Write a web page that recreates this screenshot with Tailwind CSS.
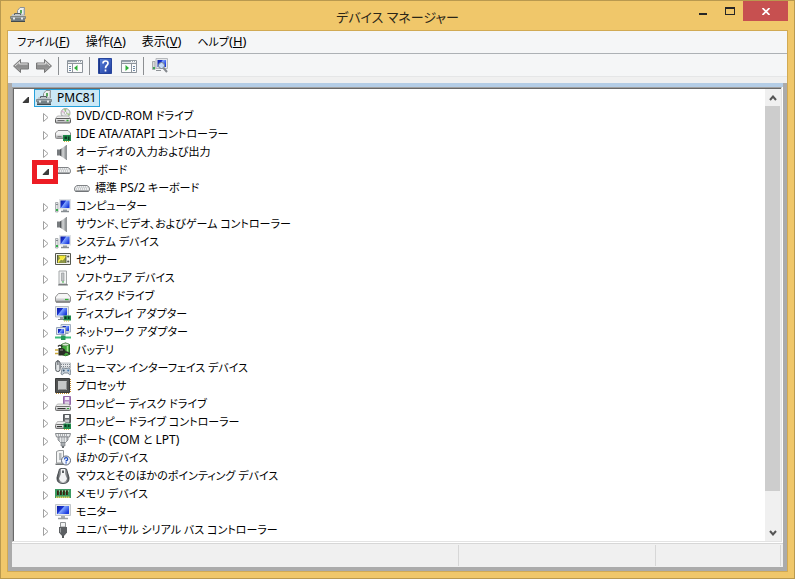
<!DOCTYPE html>
<html lang="ja">
<head>
    <meta charset="UTF-8" />
    <meta name="viewport" content="width=device-width, initial-scale=1.0" />
    <title>デバイス マネージャー</title>
    <script src="https://cdn.jsdelivr.net/npm/@tailwindcss/browser@4"></script>
</head>
<body class="flex h-screen flex-col overflow-hidden border border-[#b9994f] bg-[#f0c76a] font-['Noto_Sans','Noto_Sans_CJK_JP',sans-serif] text-[12px] text-black select-none [font-feature-settings:'palt']">

    <!-- Icon sprite -->
    <svg class="absolute size-0" aria-hidden="true">
        <defs>
            <linearGradient id="gSilver" x1="0" y1="0" x2="0" y2="1"><stop offset="0" stop-color="#f6f6f6" /><stop offset="1" stop-color="#a3a5a7" /></linearGradient>
            <linearGradient id="gCone" x1="0" y1="0" x2="1" y2="0"><stop offset="0" stop-color="#4f5356" /><stop offset=".45" stop-color="#d5d7d8" /><stop offset="1" stop-color="#7d8184" /></linearGradient>
            <linearGradient id="gDark" x1="0" y1="0" x2="1" y2="0"><stop offset="0" stop-color="#3c3f42" /><stop offset=".5" stop-color="#d8dadc" /><stop offset="1" stop-color="#45484b" /></linearGradient>
            <linearGradient id="gBlue" x1="0" y1="0" x2="1" y2=".6"><stop offset="0" stop-color="#0a1a9c" /><stop offset=".42" stop-color="#1b34d0" /><stop offset=".5" stop-color="#7fa4ff" /><stop offset="1" stop-color="#1c3de0" /></linearGradient>
            <linearGradient id="gHelp" x1="0" y1="0" x2="1" y2="1"><stop offset="0" stop-color="#5b83dd" /><stop offset="1" stop-color="#1f3d9f" /></linearGradient>
            <linearGradient id="gArrow" x1="0" y1="0" x2="0" y2="1"><stop offset="0" stop-color="#c2c2c2" /><stop offset=".5" stop-color="#8b8b8b" /><stop offset="1" stop-color="#a8a8a8" /></linearGradient>
        </defs>

        <symbol id="manager" viewBox="0 0 16 16">
            <path d="M7.500 8V3.500L10 .5h4.500V8" fill="#eef0f0" stroke="#8d9294" />
            <path d="M10 3h2v3.500h-2z" fill="#58a85c" />
            <path d="M13.500 1.500h1V8h-1z" fill="#a8acae" />
            <path d="M2.500 7h11l1.500 2.500H1z" fill="#c0c6c9" />
            <path d="M4.500 8V6.500h6V8" fill="none" stroke="#5a6266" />
            <path d="M.5 9.500h15v2H.5z" fill="#9aa3a8" stroke="#5c666a" stroke-width=".6" />
            <path d="M1 11.500h14V15H1z" fill="#727e84" />
            <path d="M1 14.500h14" stroke="#41494d" />
            <path d="M3 10.500h2v2H3zM11 10.500h2v2h-2z" fill="#e6eaeb" />
        </symbol>

        <symbol id="dvd" viewBox="0 0 16 16">
            <circle cx="10.500" cy="5" r="4.500" fill="#e9ebec" stroke="#8c8f92" stroke-width=".8" />
            <path d="M10.500 5L9 1l2.500-.2zM10.500 5l3.500 2.500.8-1.800z" fill="#9dcb7a" />
            <path d="M10.500 5l-4-1 .5-1.500z" fill="#e4a7d0" />
            <circle cx="10.500" cy="5" r="1.300" fill="#fff" stroke="#888" stroke-width=".5" />
            <path d="M2.500 8h11l2 2.500H.5z" fill="#ededed" stroke="#8a8a8a" stroke-width=".6" />
            <rect x=".5" y="10.500" width="15" height="4.500" rx="1" fill="url(#gSilver)" stroke="#5c5c5c" />
            <path d="M2.500 12.500h7" stroke="#6c6c6c" /><path d="M11.500 12.500h2" stroke="#31b431" stroke-width="1.500" />
        </symbol>

        <symbol id="ide" viewBox="0 0 16 16">
            <path d="M3 4.500h10L15.500 7v4.500q0 1-1 1h-13q-1 0-1-1V7z" fill="#f4f4f4" stroke="#8b8b8b" />
            <path d="M1 8h14v4H1z" fill="url(#gSilver)" /><path d="M2.500 10.500h4" stroke="#888" />
            <path d="M8 9h8v6H8z" fill="#1f8a4a" /><path d="M9.500 10.500H12V13H9.500zM13 10.500h1.500V14H13z" fill="#0c3a22" />
            <path d="M9 15.500h5" stroke="#d7b93c" stroke-dasharray="1 1" />
        </symbol>

        <symbol id="speaker" viewBox="0 0 16 16">
            <path d="M2 5.500h3v6H2z" fill="#777b7e" />
            <path d="M5 5.500L11.500 1v15L5 11.500z" fill="url(#gCone)" />
            <path d="M11.500 1v15" stroke="#909497" />
            <path d="M5.500 5.500v6" stroke="#4b4f52" stroke-width=".8" />
        </symbol>

        <symbol id="keyboard" viewBox="0 0 16 16">
            <path d="M3 5.500h10q2.500 1 2.500 3.500t-1.500 2.500H2Q.5 11.500.5 9T3 5.500z" fill="#eeeff0" stroke="#808386" />
            <path d="M3 7h10.500M2 9h12" stroke="#a9adb0" stroke-dasharray="1 1" /><path d="M3 8h10.500" stroke="#c3c6c8" stroke-dasharray="1 1" stroke-dashoffset="1" />
            <path d="M1.500 11h13" stroke="#63676a" />
        </symbol>

        <symbol id="computer" viewBox="0 0 16 16">
            <path d="M.5 4.500H3V14H.5z" fill="#e4e6e8" stroke="#9a9fa3" stroke-width=".8" />
            <path d="M1 11h2v2H1z" fill="#33b04a" /><path d="M1 6.500h2" stroke="#848a8f" />
            <path d="M4 1h12v10.500H4z" fill="#dfe2e5" />
            <path d="M5.500 2.500h9V10h-9z" fill="url(#gBlue)" />
            <path d="M8 11.500h4V13H8z" fill="#9ba1a6" /><path d="M6 13.500h8" stroke="#868c91" stroke-width="1.500" />
        </symbol>

        <symbol id="sensor" viewBox="0 0 16 16">
            <path d="M.5 1.500h15v11H.5z" fill="#f2f3ee" stroke="#55584f" />
            <path d="M2 3h9v8H2z" fill="#8d9648" />
            <path d="M2.500 10.500l3.500-4 1.500 1L10.500 4" fill="none" stroke="#fff04a" stroke-width="1.600" />
            <path d="M4 4h5L8 6.500H5z" fill="#f5e932" />
            <path d="M2.500 3v8M11 3v8" stroke="#4c5133" stroke-width=".8" />
            <circle cx="13.200" cy="4.500" r="1.100" fill="#50544e" /><circle cx="13.200" cy="9.500" r="1.100" fill="#50544e" />
        </symbol>

        <symbol id="software" viewBox="0 0 16 16">
            <path d="M4 1h7.500v13H4z" fill="#f3f4f4" stroke="#a5a8a9" />
            <path d="M6.500 3h2.500v8H6.500z" fill="#c1c4c5" stroke="#8e9293" stroke-width=".6" /><path d="M7 11.500h2v1H7z" fill="#42b549" />
            <path d="M3.500 14h9l.5 1.500H3z" fill="#76797b" />
        </symbol>

        <symbol id="disk" viewBox="0 0 16 16">
            <path d="M3.500 5.500h9l3 3.500V13q0 1-1 1h-13q-1 0-1-1V9z" fill="#f6f6f6" stroke="#939393" />
            <path d="M1 9.500h14v4H1z" fill="url(#gSilver)" />
            <path d="M1 14h14" stroke="#5f5f5f" /><path d="M10 11.500h3.500" stroke="#33ad35" stroke-width="1.300" />
        </symbol>

        <symbol id="display" viewBox="0 0 16 16">
            <path d="M.5.500h13v10.500H.5z" fill="#e6eaed" stroke="#b9bfc4" />
            <path d="M2 2h10v7.500H2z" fill="url(#gBlue)" />
            <path d="M5 11h3v2H5z" fill="#979da3" /><path d="M3 13.500h6" stroke="#7e858b" />
            <path d="M8.500 9.500H16V14.500H8.500z" fill="#228b4d" /><path d="M9.500 10.500h2V13h-2zM13 10.500h1.500v2.500H13z" fill="#0b3922" />
            <path d="M9 15h5" stroke="#d7b93c" stroke-dasharray="1 1" />
        </symbol>

        <symbol id="network" viewBox="0 0 16 16">
            <path d="M6 .5h9.500V8H6z" fill="#dfe7f2" stroke="#a3b0c0" /><path d="M7.500 2h6.500v5H7.500z" fill="url(#gBlue)" />
            <path d="M1.500 3.500h9v7h-9z" fill="#e3eaf4" stroke="#98a5b7" /><path d="M3 5h6v4.500H3z" fill="url(#gBlue)" />
            <path d="M10.500 8.500h3V10h-3z" fill="#8ea0b5" />
            <path d="M0 13.500h16" stroke="#3fbd78" stroke-width="2" />
            <path d="M6 11.500h4.500V16H6z" fill="#259a58" /><path d="M8 12v-1.500" stroke="#6b7c90" />
        </symbol>

        <symbol id="battery" viewBox="0 0 16 16">
            <path d="M6.500 2.500Q10.500-.5 14.500 2.500V12.500q-4 2.500-8 0z" fill="#41a83a" stroke="#2a7026" />
            <path d="M12.500 4v7.500" stroke="#a4e894" stroke-width="1.500" /><ellipse cx="10.500" cy="2.500" rx="3.200" ry="1.300" fill="#dcead7" stroke="#5e8355" stroke-width=".6" />
            <path d="M3 4.500Q5 2 7.500 5" stroke="#333" stroke-width="1.300" fill="none" />
            <path d="M0 8h3.500M0 11.500h3.500" stroke="#cfac3c" stroke-width="1.500" />
            <path d="M3.500 6h2.500Q10.500 6 10.500 9.800 10.500 13.500 6 13.500H3.500z" fill="#2b2e26" /><path d="M5 8h3" stroke="#95998d" /><path d="M10 9.800q3 0 5 2.500" stroke="#30332c" stroke-width="1.800" fill="none" />
        </symbol>

        <symbol id="hid" viewBox="0 0 16 16">
            <path d="M5 3h10.500v5H5z" fill="#e4e6e8" stroke="#a5abb0" stroke-width=".7" /><path d="M6 4.500h9M6 6.500h9" stroke="#80878d" stroke-dasharray="1 1" />
            <rect x=".7" y="1" width="4.300" height="10.500" rx="2" fill="#e1e4e6" stroke="#53595e" /><path d="M2.900 0v5" stroke="#4d5358" />
            <path d="M7 8.500Q8 7.500 9.500 8.500h3q1.500-1 2.500 0l1 5.500q-1.500 2-3-1H9q-1.500 3-3 1z" fill="#c5d0da" stroke="#6e7b87" stroke-width=".8" />
            <circle cx="8.700" cy="10.500" r="1" fill="#3b536b" /><circle cx="13.200" cy="10.500" r="1" fill="#4479b0" />
        </symbol>

        <symbol id="cpu" viewBox="0 0 16 16">
            <path d="M1 15.500h14M15.500 1v14" stroke="#c08a2d" stroke-dasharray="1 1" />
            <path d="M.5.500h14v14H.5z" fill="#505252" stroke="#3a3c3c" />
            <path d="M3 3h9v9H3z" fill="#c6c8c8" /><path d="M3.500 11.500h8v-8" fill="none" stroke="#8f9191" />
        </symbol>

        <symbol id="floppy" viewBox="0 0 16 16">
            <path d="M8.500.5h7v8h-7z" fill="#b488c5" stroke="#9468a8" /><path d="M10 1h4v3h-4z" fill="#f5eff8" /><path d="M10 5.500h4v3h-4z" fill="#e2d4e8" />
            <path d="M2.500 8h11l2 2.500H.5z" fill="#ececec" stroke="#999" stroke-width=".6" />
            <rect x=".5" y="10.500" width="15" height="4" rx="1" fill="url(#gSilver)" stroke="#707070" />
            <path d="M2.500 12.500h8" stroke="#333" /><path d="M12 12.500h2" stroke="#34a938" />
        </symbol>

        <symbol id="floppyctl" viewBox="0 0 16 16">
            <path d="M8.500.5h7v8h-7z" fill="#6d7073" stroke="#55585a" /><path d="M10 1h4v3h-4z" fill="#f3f4f5" /><path d="M10 5.500h4v3h-4z" fill="#c5c8ca" />
            <path d="M2.500 7.500h8v3H.5z" fill="#ececec" stroke="#999" stroke-width=".6" />
            <rect x=".5" y="10.500" width="14" height="4" rx="1" fill="url(#gSilver)" stroke="#707070" /><path d="M2 12.500h5" stroke="#333" />
            <path d="M8.500 9.500H16V15H8.500z" fill="#1f8a4a" /><path d="M9.500 10.500h2V13h-2zM13 10.500h1.500V13H13z" fill="#0c3a22" /><path d="M9 15.500h5" stroke="#d7b93c" stroke-dasharray="1 1" />
        </symbol>

        <symbol id="port" viewBox="0 0 16 16">
            <path d="M.5 1.500h15l-1 3.500h-13z" fill="#eceeef" stroke="#85898c" />
            <path d="M3 3h10" stroke="#686d71" stroke-dasharray="1 1" />
            <path d="M3 5h10v3l-2.500 2.500h-5L3 8z" fill="#b9bdc0" stroke="#7d8285" stroke-width=".8" />
            <path d="M5.500 5.500v4.500M8 5.500V10M10.500 5.500V10" stroke="#e9ebec" />
            <path d="M6 10.500h4V14H6z" fill="#a8adb0" stroke="#767b7f" stroke-width=".6" /><path d="M8 14v2" stroke="#6a6f73" stroke-width="2" />
        </symbol>

        <symbol id="other" viewBox="0 0 16 16">
            <path d="M1.500 1.500L4 .5h4.500V13h-7z" fill="#f3f4f4" stroke="#95989a" /><path d="M4 3h2.500v7H4z" fill="#b5b9bb" /><path d="M.5 13.500h9V15h-9z" fill="#6f7375" />
            <circle cx="11" cy="10.500" r="4.500" fill="#f2f6fd" stroke="#5c6575" />
            <path d="M9.500 9.500q0-1.800 1.600-1.800t1.600 1.600q0 .8-1.600 1.600v.6M11.100 12.300v1.200" fill="none" stroke="#1d4cc0" stroke-width="1.300" />
        </symbol>

        <symbol id="mouse" viewBox="0 0 16 16">
            <path d="M4.500 1Q8-.5 11.500 1L14 9.500Q14.500 15.500 8 15.500T2 9.500z" fill="url(#gDark)" stroke="#4a4f53" />
            <path d="M6 6h4l2 4.500Q11 14 8 14t-4-3.500z" fill="#f2f3f4" />
            <path d="M6 1h4v6H6z" fill="#f3f4f4" /><path d="M8 2.500v2.500" stroke="#34393d" stroke-width="1.600" />
        </symbol>

        <symbol id="memory" viewBox="0 0 16 16">
            <path d="M0 3h16v9H0z" fill="#3c9a62" />
            <path d="M2 4.500h1.800V9H2zM5 4.500h1.800V9H5zM8 4.500h1.800V9H8zM11 4.500h1.800V9H11z" fill="#3a2412" />
            <path d="M4 5h1M7 5h1M10 5h1M13 5h1" stroke="#e3ead7" />
            <path d="M1 11.300h14" stroke="#e4d160" stroke-width="1.500" stroke-dasharray="1.500 .5" />
        </symbol>

        <symbol id="monitor" viewBox="0 0 16 16">
            <path d="M.5 0.500h15v11H.5z" fill="#e7e9eb" stroke="#c3c7ca" />
            <path d="M2 2h12v8H2z" fill="url(#gBlue)" /><path d="M6 12h4v2H6z" fill="#a9adb1" /><path d="M3 14.500h10" stroke="#9a9fa3" stroke-width="1.500" />
        </symbol>

        <symbol id="usb" viewBox="0 0 16 16">
            <path d="M5.500.5h5V5h-5z" fill="#f2f3f3" stroke="#909395" />
            <path d="M4 5h8v5.500L9.500 13.500h-3L4 10.500z" fill="#5d6063" /><path d="M5.500 6v4.500" stroke="#9da0a2" /><path d="M8 13v3" stroke="#55585a" stroke-width="2" />
        </symbol>

        <symbol id="storage" viewBox="0 0 16 16">
            <path d="M3.500 1.500h9L15.500 5v7h-15V5z" fill="#a9abac" stroke="#6f7172" />
        </symbol>

        <symbol id="back" viewBox="0 0 16 16">
            <path d="M.5 8L7.500 1.500V5h8v6h-8v3.500z" fill="url(#gArrow)" stroke="#777" /><path d="M2 8l4.500-4v2h8" fill="none" stroke="#dcdcdc" />
        </symbol>

        <symbol id="pane" viewBox="0 0 16 16">
            <path d="M.5 2.500h15v12H.5z" fill="#fcfcfc" stroke="#8d949b" /><path d="M1 3.500h14" stroke="#9aa4ae" stroke-width="1.500" /><path d="M1 5.500h14" stroke="#8d949b" /><path d="M10 3.500h1M12 3.500h1M14 3.500h1" stroke="#fff" />
        </symbol>

        <symbol id="scan" viewBox="0 0 16 16">
            <path d="M.5 3.500h2.500v8H.5z" fill="#d9dadb" stroke="#999c9e" stroke-width=".8" /><path d="M1 9h2v2H1z" fill="#3ea557" />
            <path d="M4 .5h11.500v10H4z" fill="#e5e7ea" stroke="#b6b9bd" /><path d="M5.500 2H14v7H5.500z" fill="url(#gBlue)" />
            <path d="M4 12.500h5" stroke="#8f9397" />
            <circle cx="9.500" cy="7.500" r="3" fill="#cfe3fa" fill-opacity=".9" stroke="#74808c" /><path d="M11.500 10l3.500 4" stroke="#85898e" stroke-width="2" />
        </symbol>

        <symbol id="closed" viewBox="0 0 12 12"><path d="M3.500 2.500v8l4.500-4z" fill="#fff" stroke="#a0a0a0" /></symbol>
        <symbol id="opened" viewBox="0 0 12 12"><path d="M8.500 4v5.500H3z" fill="#3c3c3c" stroke="#1f1f1f" stroke-width=".8" /></symbol>
    </svg>

    <!-- Title bar -->
    <header class="flex h-[29px] shrink-0 items-start pl-[9px] pr-[6px]">
        <svg class="mt-[6px] size-4"><use href="#manager" /></svg>
        <h1 class="flex-1 pl-[80px] pt-1 text-center text-[13px] leading-6 text-[#2b2618]">デバイス マネージャー</h1>
        <button aria-label="最小化" class="flex h-5 w-[27px] justify-center pt-3"><span class="h-[2px] w-2 bg-[#262626]"></span></button>
        <button aria-label="最大化" class="flex h-5 w-[27px] justify-center pt-[6px]"><span class="h-2 w-[10px] border border-t-2 border-[#262626]"></span></button>
        <button aria-label="閉じる" class="flex h-5 w-[45px] items-center justify-center bg-[#c75050]">
            <svg class="h-[7px] w-2" viewBox="0 0 8 7"><path d="M.5 0l7 7M7.500 0l-7 7" stroke="#fff" stroke-width="1.700" /></svg>
        </button>
    </header>

    <div class="mx-[6px] mb-[6px] flex min-h-0 flex-1 flex-col border border-[#d1aa54] bg-[#f5f6f7]">
        <!-- Menus -->
        <nav class="flex h-[23px] shrink-0 items-center gap-4 border-b border-[#adb1b5] pl-[9px]">
            <button class="text-[11px]">ファイル<span class="text-[13px]">(<u>F</u>)</span></button>
            <button>操作<span class="text-[13px]">(<u>A</u>)</span></button>
            <button>表示<span class="text-[13px]">(<u>V</u>)</span></button>
            <button class="text-[11px]">ヘルプ<span class="text-[13px]">(<u>H</u>)</span></button>
        </nav>

        <!-- Toolbar -->
        <div class="flex h-[23px] shrink-0 items-center border-b border-[#e5e6e7] pl-[5px] pt-[2px]">
            <button aria-label="戻る"><svg class="size-4"><use href="#back" /></svg></button>
            <button aria-label="進む" class="ml-[7px]"><svg class="size-4 -scale-x-100"><use href="#back" /></svg></button>
            <span class="ml-[6px] mr-2 h-[18px] w-px bg-[#8c8f92]"></span>
            <button aria-label="コンソール ツリーの表示"><svg class="size-4" viewBox="0 0 16 16"><use href="#pane" /><path d="M5.500 6v8" stroke="#8d949b" /><path d="M2 8.500h2M2 10.500h2M2 12.500h2" stroke="#6f8aa5" /><path d="M10.500 7v6L7 10z" fill="#2eae36" /></svg></button>
            <span class="ml-[6px] mr-2 h-[18px] w-px bg-[#8c8f92]"></span>
            <button aria-label="ヘルプ">
                <svg class="h-4 w-[14px]" viewBox="0 0 14 16"><path d="M.5.500h13v15H.5z" fill="url(#gHelp)" stroke="#27459c" /><path d="M1.500 1v14" stroke="#1d3788" /><path d="M5 5.500Q5 3 7.500 3T10 5.300q0 1.200-1.300 2.200Q7.500 8.500 7.500 10.200M7.500 11.500v2" fill="none" stroke="#fff" stroke-width="1.700" /></svg>
            </button>
            <button aria-label="操作ウィンドウの表示" class="ml-[9px]"><svg class="size-4" viewBox="0 0 16 16"><use href="#pane" /><path d="M10.500 6v8" stroke="#8d949b" /><path d="M12 8.500h2M12 10.500h2M12 12.500h2" stroke="#6f8aa5" /><path d="M4.500 7v6L8 10z" fill="#2eae36" /></svg></button>
            <span class="ml-[6px] mr-2 h-[18px] w-px bg-[#8c8f92]"></span>
            <button aria-label="ハードウェア変更のスキャン"><svg class="size-4"><use href="#scan" /></svg></button>
        </div>
        <div class="h-[6px] shrink-0 bg-[#f0f0f0]"></div>

        <main class="flex min-h-0 flex-1 flex-col border-x-4 border-b-4 border-[#ababab] bg-white">
            <div class="h-1 shrink-0 bg-[#b4cde6]"></div>
            <!-- Device tree -->
            <div class="mr-px flex min-h-0 flex-1 border border-[#a0a0a0] border-b-[#e3e3e3] border-r-[#e3e3e3]">
                <div class="min-w-0 flex-1 overflow-hidden border-l border-t border-[#696969]">
                    <ul id="tree" role="tree" class="text-[11px]"></ul>
                </div>
                <div class="flex w-4 shrink-0 flex-col border-t border-[#696969] bg-[#f0f0f0]">
                    <button aria-label="上へ" class="flex h-[17px] shrink-0 items-center justify-center"><svg class="h-[6px] w-2" viewBox="0 0 8 6"><path d="M1 5l3-3.500L7 5" fill="none" stroke="#555" stroke-width="2" /></svg></button>
                    <div class="min-h-0 flex-1 pr-px"><div class="h-[92%] bg-[#cdcdcd]"></div></div>
                    <button aria-label="下へ" class="flex h-[17px] shrink-0 items-center justify-center"><svg class="h-[6px] w-2" viewBox="0 0 8 6"><path d="M1 1l3 3.500L7 1" fill="none" stroke="#555" stroke-width="2" /></svg></button>
                </div>
            </div>
            <!-- Status bar -->
            <footer class="mt-px flex h-6 shrink-0 border-t border-[#d7d7d7] bg-[#f0f0f0] pb-px pr-[2px] pt-px">
                <span class="flex-1 border-r border-[#d7d7d7]"></span>
                <span class="w-[197px] border-r border-[#d7d7d7]"></span>
                <span class="w-[125px] border-r border-[#d7d7d7]"></span>
            </footer>
        </main>
    </div>

    <script>
        // icon, label, child label
        const devices = [
            ['dvd', 'DVD/CD-ROM ドライブ'],
            ['ide', 'IDE ATA/ATAPI コントローラー'],
            ['speaker', 'オーディオの入力および出力'],
            ['keyboard', 'キーボード', '標準 PS/2 キーボード'],
            ['computer', 'コンピューター'],
            ['speaker', 'サウンド、ビデオ、およびゲーム コントローラー'],
            ['computer', 'システム デバイス'],
            ['sensor', 'センサー'],
            ['software', 'ソフトウェア デバイス'],
            ['disk', 'ディスク ドライブ'],
            ['display', 'ディスプレイ アダプター'],
            ['network', 'ネットワーク アダプター'],
            ['battery', 'バッテリ'],
            ['hid', 'ヒューマン インターフェイス デバイス'],
            ['cpu', 'プロセッサ'],
            ['floppy', 'フロッピー ディスク ドライブ'],
            ['floppyctl', 'フロッピー ドライブ コントローラー'],
            ['port', 'ポート (COM と LPT)'],
            ['other', 'ほかのデバイス'],
            ['mouse', 'マウスとそのほかのポインティング デバイス'],
            ['memory', 'メモリ デバイス'],
            ['monitor', 'モニター'],
            ['usb', 'ユニバーサル シリアル バス コントローラー'],
            ['storage', '']
        ];

        // latin runs are set one size up
        const text = s => s.replace(/[A-Z(][A-Z0-9\/\-]*|\)/g, m => `<span class="text-[12px]">${m}</span>`);

        const row = ([icon, label, child]) => `
            <li role="treeitem" class="relative flex h-[18px] items-center whitespace-nowrap pl-[26px]">
                <button aria-label="展開" class="mr-[3px] pt-px"><svg class="size-3"><use href="#${child ? 'opened' : 'closed'}" /></svg></button>
                <svg class="size-4"><use href="#${icon}" /></svg>
                <span class="pl-[5px]">${text(label)}</span>
                ${child ? '<span class="absolute left-[18px] top-[-1px] h-6 w-[26px] border-[5px] border-[#ed1c24]"></span>' : ''}
            </li>
            ${child ? `<li role="treeitem" class="flex h-[18px] items-center whitespace-nowrap pl-[60px]">
                <svg class="size-4"><use href="#${icon}" /></svg>
                <span class="pl-[5px]">${text(child)}</span>
            </li>` : ''}`;

        document.getElementById('tree').innerHTML = `
            <li role="treeitem" class="flex h-[18px] items-center pl-[6px]">
                <button aria-label="折りたたむ" class="mr-[2px] pt-px"><svg class="size-3"><use href="#opened" /></svg></button>
                <span class="flex h-[18px] items-center border border-[#26a0da] bg-[#cbe8f6] pl-px pr-[3px]">
                    <svg class="size-4"><use href="#manager" /></svg>
                    <span class="pl-[5px] text-[12px]">PMC81</span>
                </span>
            </li>` + devices.map(row).join('');
    </script>
</body>
</html>
